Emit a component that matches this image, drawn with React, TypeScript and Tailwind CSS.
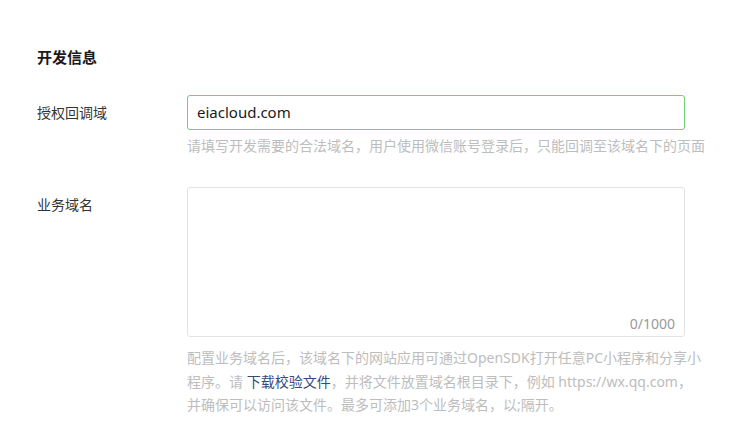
export default function App() {
  const font = { fontFamily: '"Noto Sans", "Noto Sans CJK SC", sans-serif' };
  return (
    <div className="w-[750px] h-[440px] bg-white overflow-hidden pl-[37px] pt-[46px]" style={font}>
      <div className="text-[15px] leading-[22px] font-bold text-[#1a1a1a]">开发信息</div>

      <div className="flex mt-[27px]">
        <div className="w-[150px] shrink-0 text-[14px] leading-[35px] text-[#333]">授权回调域</div>
        <div className="w-[520px]">
          <div className="w-[498px] h-[35px] border border-[#72cf77] rounded-[3px] flex items-center px-[9px] text-[15px] text-[#1a1a1a]">
            eiacloud.com
          </div>
          <div className="mt-[6px] text-[14px] leading-[20px] text-[#bdbdbd] whitespace-nowrap">
            请填写开发需要的合法域名，用户使用微信账号登录后，只能回调至该域名下的页面
          </div>
        </div>
      </div>

      <div className="flex mt-[31px]">
        <div className="w-[150px] shrink-0 text-[14px] leading-[20px] pt-[8px] text-[#333]">业务域名</div>
        <div className="w-[522px]">
          <div className="w-[498px] h-[150px] border border-[#e3e3e3] rounded-[3px] flex items-end justify-end pr-[9px] pb-[2px] text-[14px] leading-[20px] text-[#999]">
            0/1000
          </div>
          <div className="mt-[9px] text-[14px] leading-[23.5px] text-[#bdbdbd]">
            配置业务域名后，该域名下的网站应用可通过OpenSDK打开任意PC小程序和分享小程序。请 <span className="text-[#34497c]">下载校验文件</span>，并将文件放置域名根目录下，例如 https://wx.qq.com，
            <br />
            并确保可以访问该文件。最多可添加3个业务域名，以;隔开。
          </div>
        </div>
      </div>
    </div>
  );
}
